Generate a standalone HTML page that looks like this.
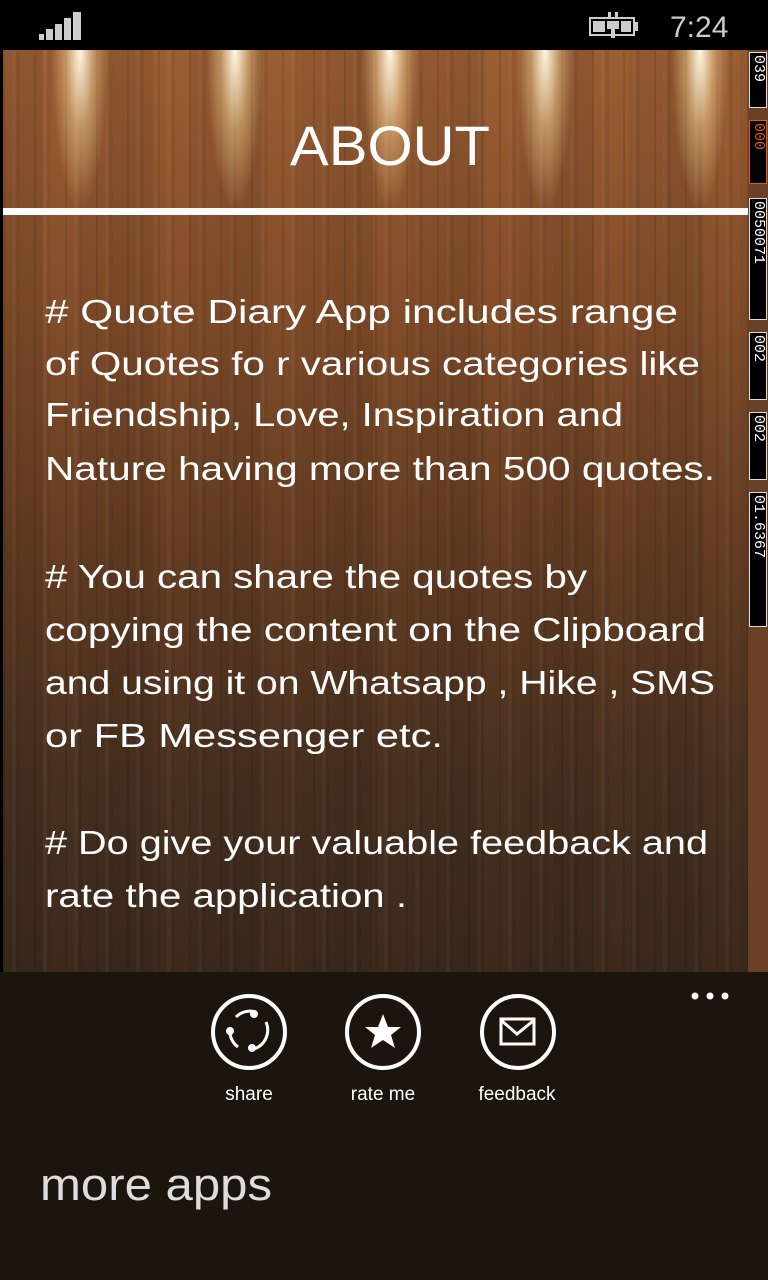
<!DOCTYPE html>
<html><head><meta charset="utf-8"><style>
html,body{margin:0;padding:0;width:768px;height:1280px;overflow:hidden;background:#000;font-family:"Liberation Sans",sans-serif}
#wood{position:absolute;left:3px;top:50px;width:745px;height:922px;
background:
radial-gradient(ellipse 28px 160px at 77px 0,rgba(255,248,225,1),rgba(255,220,160,.45) 50%,rgba(255,200,140,0) 100%),
radial-gradient(ellipse 28px 160px at 232px 0,rgba(255,248,225,1),rgba(255,220,160,.45) 50%,rgba(255,200,140,0) 100%),
radial-gradient(ellipse 28px 160px at 387px 0,rgba(255,248,225,1),rgba(255,220,160,.45) 50%,rgba(255,200,140,0) 100%),
radial-gradient(ellipse 28px 160px at 542px 0,rgba(255,248,225,1),rgba(255,220,160,.45) 50%,rgba(255,200,140,0) 100%),
radial-gradient(ellipse 28px 160px at 697px 0,rgba(255,248,225,1),rgba(255,220,160,.45) 50%,rgba(255,200,140,0) 100%),
repeating-linear-gradient(90deg,rgba(0,0,0,.1) 0 2px,rgba(0,0,0,0) 2px 9px,rgba(255,255,255,.03) 9px 13px,rgba(0,0,0,.06) 13px 17px,rgba(0,0,0,0) 17px 31px),
repeating-linear-gradient(90deg,rgba(0,0,0,.08) 0 40px,rgba(0,0,0,0) 40px 77px,rgba(0,0,0,.05) 77px 110px),
linear-gradient(180deg,#9a5e33 0%,#864f2a 25%,#633c22 55%,#47301f 80%,#3b2a1c 100%);}
#line{position:absolute;left:3px;top:208px;width:745px;height:7px;background:#fff}
#strip{position:absolute;left:748px;top:50px;width:20px;height:922px;background:#6a4127}
.seg{position:absolute;left:749px;width:18px;background:#000;border:1px solid #ddd;box-sizing:border-box;overflow:hidden}
.seg span{position:absolute;left:1px;top:2px;writing-mode:vertical-rl;color:#fff;font-family:"Liberation Mono",monospace;font-size:15px;line-height:15px}
#bar{position:absolute;left:0;top:972px;width:768px;height:308px;background:#1c150e}
.lbl{position:absolute;top:1084px;color:#fff;font-size:19px;width:120px;text-align:center}
</style></head><body>
<svg style="position:absolute;left:0;top:0" width="768" height="50">
<rect x="39" y="34" width="5" height="6" fill="#ccc"/>
<rect x="46" y="29" width="7" height="11" fill="#ccc"/>
<rect x="55" y="24" width="7" height="16" fill="#ccc"/>
<rect x="64" y="18" width="7" height="22" fill="#ccc"/>
<rect x="73" y="12" width="8" height="28" fill="#ccc"/>
<rect x="590" y="18" width="44" height="17" fill="none" stroke="#ccc" stroke-width="2"/>
<rect x="593" y="21" width="38" height="11" fill="#ccc"/>
<rect x="634" y="22" width="4" height="9" fill="#ccc"/>
<rect x="608" y="12" width="3" height="8" fill="#ccc"/><rect x="615" y="12" width="3" height="8" fill="#ccc"/>
<rect x="605" y="19" width="16" height="13" fill="#000"/><rect x="607" y="21" width="12" height="8" fill="#ccc"/>
<rect x="611" y="29" width="4" height="9" fill="#ccc"/>
<text x="670" y="37" fill="#ccc" font-size="30" font-family="Liberation Sans">7:24</text>
</svg>
<div id="wood"></div>
<div id="line"></div>
<div id="strip"></div>
<div class="seg" style="top:52px;height:56px"><span>039</span></div>
<div class="seg" style="top:120px;height:64px;border-color:#e05a10"><span style="color:#e05a10">000</span></div>
<div class="seg" style="top:198px;height:122px"><span>0050071</span></div>
<div class="seg" style="top:332px;height:68px"><span>002</span></div>
<div class="seg" style="top:412px;height:68px"><span>002</span></div>
<div class="seg" style="top:492px;height:135px"><span>01.6367</span></div>
<svg style="position:absolute;left:0;top:0" width="768" height="972">
<text x="390" y="165" fill="#fff" font-size="56" text-anchor="middle" textLength="200" lengthAdjust="spacingAndGlyphs" font-family="Liberation Sans">ABOUT</text>
<g fill="#fff" font-size="33" font-family="Liberation Sans">
<text x="45" y="323" textLength="633" lengthAdjust="spacingAndGlyphs">#  Quote  Diary  App includes range</text>
<text x="45" y="375" textLength="655" lengthAdjust="spacingAndGlyphs">of Quotes fo r  various categories like</text>
<text x="45" y="426" textLength="578" lengthAdjust="spacingAndGlyphs">Friendship, Love, Inspiration  and</text>
<text x="45" y="480" textLength="670" lengthAdjust="spacingAndGlyphs">Nature  having more than 500 quotes.</text>
<text x="45" y="588" textLength="542" lengthAdjust="spacingAndGlyphs">#  You can share the quotes by</text>
<text x="45" y="641" textLength="661" lengthAdjust="spacingAndGlyphs">copying the content on the Clipboard</text>
<text x="45" y="694" textLength="670" lengthAdjust="spacingAndGlyphs">and using it on Whatsapp , Hike , SMS</text>
<text x="45" y="747" textLength="398" lengthAdjust="spacingAndGlyphs">or  FB  Messenger  etc.</text>
<text x="45" y="854" textLength="663" lengthAdjust="spacingAndGlyphs"># Do give your valuable feedback and</text>
<text x="45" y="907" textLength="362" lengthAdjust="spacingAndGlyphs">rate the application .</text>
</g>
</svg>
<div id="bar"></div>
<svg style="position:absolute;left:0;top:972px" width="768" height="308">
<g fill="#fff"><circle cx="695" cy="24" r="3.5"/><circle cx="710" cy="24" r="3.5"/><circle cx="725" cy="24" r="3.5"/></g>
<g fill="none" stroke="#fff" stroke-width="4">
<circle cx="249" cy="60" r="36"/><circle cx="383" cy="60" r="36"/><circle cx="518" cy="60" r="36"/>
<path d="M236 45 A20 20 0 0 1 256 40" stroke-width="3"/>
<path d="M266 50 A20 20 0 0 1 254 77" stroke-width="3"/>
<path d="M238 75 A20 20 0 0 1 230 56" stroke-width="3"/>
<rect x="501" y="47" width="33" height="25" stroke-width="3"/>
<path d="M502 49 L517 62 L533 49" stroke-width="3"/>
</g>
<g fill="#fff"><circle cx="254" cy="42" r="4"/><circle cx="230" cy="59" r="4"/><circle cx="252" cy="76" r="4"/></g>
<path fill="#fff" d="M383 42 L388 55 L401 55 L391 63 L395 76 L383 68 L371 76 L375 63 L365 55 L378 55 Z"/>
<text x="40" y="228" fill="#ddd" font-size="45" font-family="Liberation Sans" textLength="232" lengthAdjust="spacingAndGlyphs">more apps</text>
</svg>
<div class="lbl" style="left:189px">share</div>
<div class="lbl" style="left:323px">rate me</div>
<div class="lbl" style="left:457px">feedback</div>
</body></html>
